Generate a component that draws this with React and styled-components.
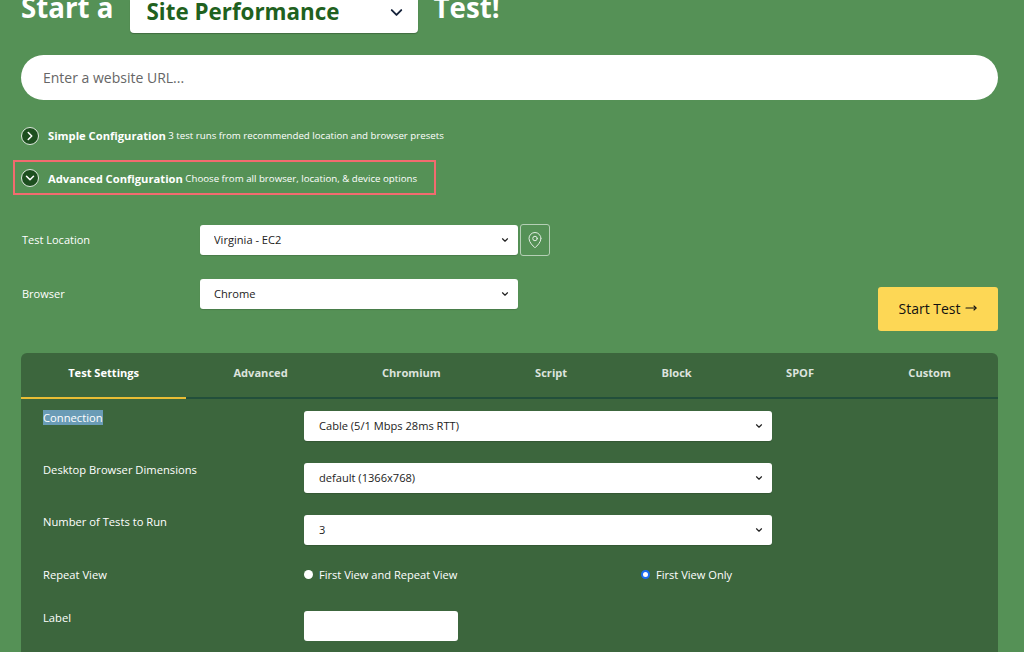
import styled, { createGlobalStyle } from 'styled-components';
import { ChevronRight, ChevronDown, MapPin, MoveRight } from 'lucide-react';

const tabs = ['Test Settings', 'Advanced', 'Chromium', 'Script', 'Block', 'SPOF', 'Custom'];

function Select({ value, wide }) {
    return (
        <SelectWrap $wide={wide}>
            <SelectBox defaultValue={value} $wide={wide}>
                <option>{value}</option>
            </SelectBox>
            <ChevronDown size={10} strokeWidth={2.8} />
        </SelectWrap>
    );
}

export default function App() {
    return (
        <Page>
            <GlobalStyle />
            <Title>
                Start a
                <TestType>
                    Site Performance
                    <ChevronDown size={19} strokeWidth={2.4} />
                </TestType>
                Test!
            </Title>
            <UrlInput placeholder="Enter a website URL..." />

            <ConfigRow>
                <Toggle><ChevronRight size={14} strokeWidth={2.6} /></Toggle>
                <b>Simple Configuration</b>
                <span>3 test runs from recommended location and browser presets</span>
            </ConfigRow>
            <ConfigRow $marked>
                <Toggle><ChevronDown size={14} strokeWidth={2.6} /></Toggle>
                <b>Advanced Configuration</b>
                <span>Choose from all browser, location, &amp; device options</span>
            </ConfigRow>

            <TopForm>
                <div>
                    <FormRow>
                        <TopLabel>Test Location</TopLabel>
                        <Select value="Virginia - EC2" />
                        <PinButton><MapPin size={18} strokeWidth={1.3} /></PinButton>
                    </FormRow>
                    <FormRow>
                        <TopLabel>Browser</TopLabel>
                        <Select value="Chrome" />
                    </FormRow>
                </div>
                <StartButton>Start Test <MoveRight size={12} strokeWidth={2.2} /></StartButton>
            </TopForm>

            <Panel>
                <TabBar>
                    {tabs.map((t, i) => <Tab key={t} $active={i === 0}>{t}</Tab>)}
                </TabBar>
                <Settings>
                    <SettingRow>
                        <SettingLabel><Selected>Connection</Selected></SettingLabel>
                        <Select wide value="Cable (5/1 Mbps 28ms RTT)" />
                    </SettingRow>
                    <SettingRow>
                        <SettingLabel>Desktop Browser Dimensions</SettingLabel>
                        <Select wide value="default (1366x768)" />
                    </SettingRow>
                    <SettingRow>
                        <SettingLabel>Number of Tests to Run</SettingLabel>
                        <Select wide value="3" />
                    </SettingRow>
                    <RadioRow>
                        <SettingLabel>Repeat View</SettingLabel>
                        <RadioGroup>
                            <RadioLabel><Radio type="radio" name="repeat" />First View and Repeat View</RadioLabel>
                            <RadioLabel><Radio type="radio" name="repeat" defaultChecked />First View Only</RadioLabel>
                        </RadioGroup>
                    </RadioRow>
                    <SettingRow>
                        <SettingLabel>Label</SettingLabel>
                        <TextBox />
                    </SettingRow>
                </Settings>
            </Panel>
        </Page>
    );
}

const GlobalStyle = createGlobalStyle`
    html, body {
        margin: 0;
        height: 652px;
        overflow: hidden;
        background: #559156;
    }
    * {
        box-sizing: border-box;
        font-family: "Open Sans", "Noto Sans", sans-serif;
    }
`;

const Page = styled.main`
    height: 652px;
    overflow: hidden;
    padding: 0 26px 0 21px;
    color: #fff;
`;

/* the page is scrolled a little in the shot, so the heading text is cut by the top edge */
const Title = styled.h1`
    display: flex;
    align-items: flex-start;
    gap: 16px;
    height: 33px;
    margin: 0 0 22px 0;
    font-size: 27.7px;
    line-height: 15px;
    font-weight: 700;
    white-space: nowrap;
`;

const TestType = styled.div`
    width: 288px;
    height: 33px;
    padding: 0 12px 9px 17px;
    display: flex;
    align-items: center;
    justify-content: space-between;
    background: #fff;
    border-radius: 0 0 4px 4px;
    box-shadow: 0 1px 1px rgba(0, 0, 0, 0.25);
    color: #1f6120;
    font-size: 22.4px;
    line-height: 22px;
    svg {
        color: #16233a;
    }
`;

const UrlInput = styled.input`
    display: block;
    width: 100%;
    height: 45px;
    padding: 0 22px;
    border: none;
    border-radius: 23px;
    background: #fff;
    font-size: 14px;
    outline: none;
    &::placeholder {
        color: #666;
        opacity: 1;
    }
`;

const ConfigRow = styled.div`
    display: flex;
    align-items: center;
    gap: 2.5px;
    height: 35px;
    width: 423px;
    margin: ${props => props.$marked ? '7px 0 0 -8px' : '18px 0 0 -8px'};
    padding: ${props => props.$marked ? '1px 0 0 6px' : '0 0 0 6px'};
    border: 2px solid ${props => props.$marked ? '#f26b6f' : 'transparent'};
    font-size: 9.7px;
    white-space: nowrap;
    b {
        font-size: 11.2px;
        margin-left: 6.5px;
    }
`;

const Toggle = styled.span`
    width: 18px;
    height: 18px;
    flex: none;
    display: flex;
    align-items: center;
    justify-content: center;
    border-radius: 50%;
    border: 1px solid #dfe9df;
    background: #1d4f1f;
    color: #fff;
`;

const TopForm = styled.div`
    display: flex;
    justify-content: space-between;
    margin-top: 29px;
`;

const FormRow = styled.div`
    display: flex;
    align-items: center;
    height: 32px;
    margin-bottom: 22px;
`;

const TopLabel = styled.label`
    width: 179px;
    padding: 0 0 2px 1px;
    font-size: 11px;
`;

const SelectWrap = styled.div`
    position: relative;
    width: ${props => props.$wide ? '468px' : '318px'};
    height: 30px;
    svg {
        position: absolute;
        right: 8px;
        top: 10px;
        color: #222;
        pointer-events: none;
    }
`;

const SelectBox = styled.select`
    width: 100%;
    height: 30px;
    padding: 0 15px 2px ${props => props.$wide ? '15px' : '14px'};
    border: none;
    border-radius: 3px;
    background: #fff;
    color: #222;
    font-size: 11.1px;
    appearance: none;
    box-shadow: 0 1px 1px rgba(0, 0, 0, 0.15);
`;

const PinButton = styled.button`
    width: 30px;
    height: 32px;
    margin-left: 2px;
    padding: 0;
    display: flex;
    align-items: center;
    justify-content: center;
    background: transparent;
    border: 1px solid #b5cfb5;
    border-radius: 3px;
    color: #e6f0e6;
`;

const StartButton = styled.button`
    width: 120px;
    height: 44px;
    margin-top: 63px;
    padding: 0 1px 2px 0;
    display: flex;
    align-items: center;
    justify-content: center;
    gap: 4px;
    border: none;
    border-radius: 3px;
    background: #fdd755;
    color: #111;
    font-size: 14px;
`;

const Panel = styled.section`
    margin-top: 21px;
    height: 320px;
    background: #3c663d;
    border-radius: 6px 6px 0 0;
`;

const TabBar = styled.div`
    display: flex;
    height: 46px;
    border-bottom: 2px solid #224f3b;
`;

const Tab = styled.div`
    flex: 1 1 auto;
    height: 46px;
    padding: 0 47px 6px 47px;
    display: flex;
    align-items: center;
    justify-content: center;
    font-size: 11.1px;
    font-weight: 700;
    white-space: nowrap;
    color: ${props => props.$active ? '#fff' : '#dde3dd'};
    border-bottom: 2px solid ${props => props.$active ? '#e8bd35' : 'transparent'};
`;

const Settings = styled.div`
    padding: 12px 22px 0 22px;
`;

const SettingRow = styled.div`
    display: flex;
    align-items: flex-start;
    height: 30px;
    margin-bottom: 22px;
`;

const SettingLabel = styled.label`
    width: 261px;
    flex: none;
    font-size: 11.2px;
    line-height: 13px;
`;

const Selected = styled.span`
    background: #6a9cb6;
`;

const RadioRow = styled(SettingRow)`
    height: 14px;
    margin-top: 1px;
    margin-bottom: 30px;
    align-items: center;
`;

const RadioGroup = styled.div`
    display: flex;
`;

const RadioLabel = styled.label`
    width: 337px;
    display: flex;
    align-items: center;
    gap: 6px;
    font-size: 11.1px;
`;

const Radio = styled.input`
    appearance: none;
    width: 9px;
    height: 9px;
    margin: 0;
    border-radius: 50%;
    background: #fff;
    &:checked {
        border: 2.5px solid #1a6cf0;
    }
`;

const TextBox = styled.input`
    width: 154px;
    height: 30px;
    border: none;
    border-radius: 3px;
    background: #fff;
`;
